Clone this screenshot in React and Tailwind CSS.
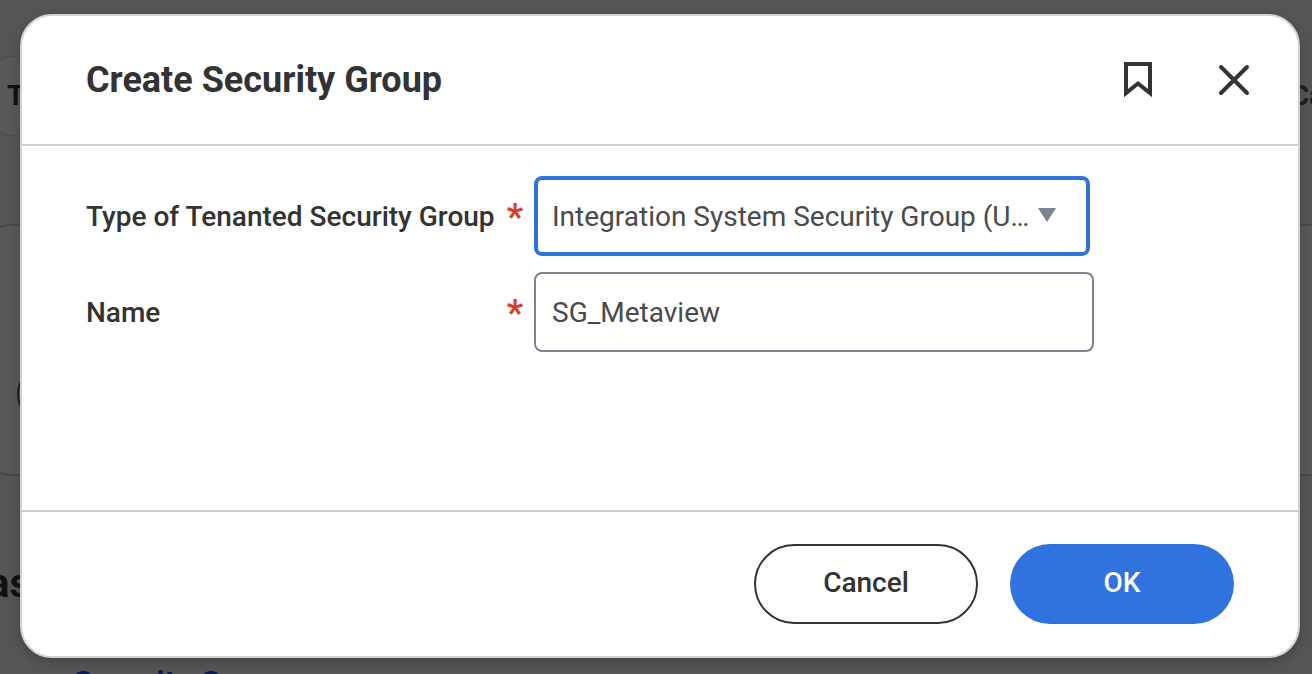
import { useState } from "react";

const GROUP_TYPES = [
  "Integration System Security Group (Unconstrained)",
  "Integration System Security Group (Constrained)",
];

function BookmarkIcon() {
  return (
    <svg width="28" height="36" viewBox="0 0 28 36" fill="none" aria-hidden="true">
      <path d="M2 2H26V31L14 21.5L2 31Z" stroke="currentColor" strokeWidth="4" />
    </svg>
  );
}

function CloseIcon() {
  return (
    <svg width="32" height="32" viewBox="0 0 32 32" fill="none" aria-hidden="true">
      <path d="M3 3L29 29M29 3L3 29" stroke="currentColor" strokeWidth="4" strokeLinecap="round" />
    </svg>
  );
}

function FieldLabel({ htmlFor, children }) {
  return (
    <label
      htmlFor={htmlFor}
      className="flex w-[448px] shrink-0 items-center justify-between pt-[2px] pr-[11px] text-[28px] font-medium text-[#333333]"
    >
      {children}
      <span className="text-[36px] leading-10 font-bold text-[#d43f2e]">*</span>
    </label>
  );
}

// Page that stays visible around the dialog
function Backdrop() {
  return (
    <div className="h-full bg-[#f2f2f2] pt-[55px] text-[#333333]" aria-hidden="true">
      <div className="flex items-center justify-between">
        <div className="-ml-6 flex h-[82px] w-60 items-center rounded-full border-2 border-[#e4e4e4] bg-[#fbfbfb] pl-[29px] text-[28px] font-bold">
          T
        </div>
        <div className="-mr-3 text-[28px] font-bold text-[#4a5666]">Ca</div>
      </div>
      <div className="-mr-10 -ml-5 mt-[87px] flex h-[252px] items-end rounded-[32px] border-2 border-[#d0d4d8] bg-[#fbfbfb] pb-[52px] pl-[35px]">
        <div className="size-14 rounded-full border-2 border-[#4a5666]"></div>
      </div>
      <div className="-ml-3 mt-[84px] text-[40px] leading-[48px] font-bold">as</div>
      <div className="mt-[58px] pl-[73px] text-[32px] leading-8 font-bold text-[#1f4fe8]">Security G</div>
    </div>
  );
}

export default function App() {
  const [type, setType] = useState(GROUP_TYPES[0]);
  const [name, setName] = useState("SG_Metaview");

  return (
    <div className="relative h-screen overflow-hidden font-['Roboto',sans-serif]">
      <Backdrop />

      <div className="absolute inset-0 flex bg-black/65 pt-[14px] pr-3 pb-4 pl-5">
        <div
          role="dialog"
          aria-labelledby="dialog-title"
          className="flex min-w-0 flex-1 flex-col rounded-[32px] border-2 border-[#ced3d9] bg-white shadow-[0_4px_12px_rgba(0,0,0,0.2)]"
        >
          <header className="flex h-[130px] shrink-0 items-center justify-between border-b-2 border-[#ced3d9] pr-8 pl-16 text-[#333333]">
            <h1 id="dialog-title" className="text-[36px] leading-10 font-bold">
              Create Security Group
            </h1>
            <div className="flex gap-8">
              <button type="button" aria-label="Bookmark" className="flex size-16 items-center justify-center">
                <BookmarkIcon />
              </button>
              <button type="button" aria-label="Close" className="flex size-16 items-center justify-center">
                <CloseIcon />
              </button>
            </div>
          </header>

          <main className="flex flex-1 flex-col gap-4 px-16 pt-[30px]">
            <div className="flex">
              <FieldLabel htmlFor="group-type">Type of Tenanted Security Group</FieldLabel>
              <div className="relative w-[556px]">
                <select
                  id="group-type"
                  value={type}
                  onChange={(e) => setType(e.target.value)}
                  className="h-20 w-full appearance-none rounded-lg border-4 border-[#3173de] bg-white pt-[2px] pr-[54px] pl-[14px] text-[28px] text-ellipsis text-[#4a4a4a] outline-none"
                >
                  {GROUP_TYPES.map((t) => (
                    <option key={t}>{t}</option>
                  ))}
                </select>
                <svg
                  className="pointer-events-none absolute top-8 right-[33px]"
                  width="20"
                  height="14"
                  viewBox="0 0 20 14"
                  aria-hidden="true"
                >
                  <path d="M1 0H19L10 14Z" fill="#7b858f" />
                </svg>
              </div>
            </div>

            <div className="flex">
              <FieldLabel htmlFor="group-name">Name</FieldLabel>
              <input
                id="group-name"
                type="text"
                value={name}
                onChange={(e) => setName(e.target.value)}
                className="h-20 w-[560px] rounded-lg border-2 border-[#7b858f] bg-white px-4 text-[28px] text-[#4a4a4a] outline-none"
              />
            </div>
          </main>

          <footer className="flex justify-end gap-8 border-t-2 border-[#cccccc] px-16 py-8 text-[28px] font-medium">
            <button
              type="button"
              className="h-20 w-56 rounded-full border-2 border-[#333333] bg-white pb-[2px] text-[#333333]"
            >
              Cancel
            </button>
            <button type="button" className="h-20 w-56 rounded-full bg-[#3173de] pb-[2px] text-white">
              OK
            </button>
          </footer>
        </div>
      </div>
    </div>
  );
}
